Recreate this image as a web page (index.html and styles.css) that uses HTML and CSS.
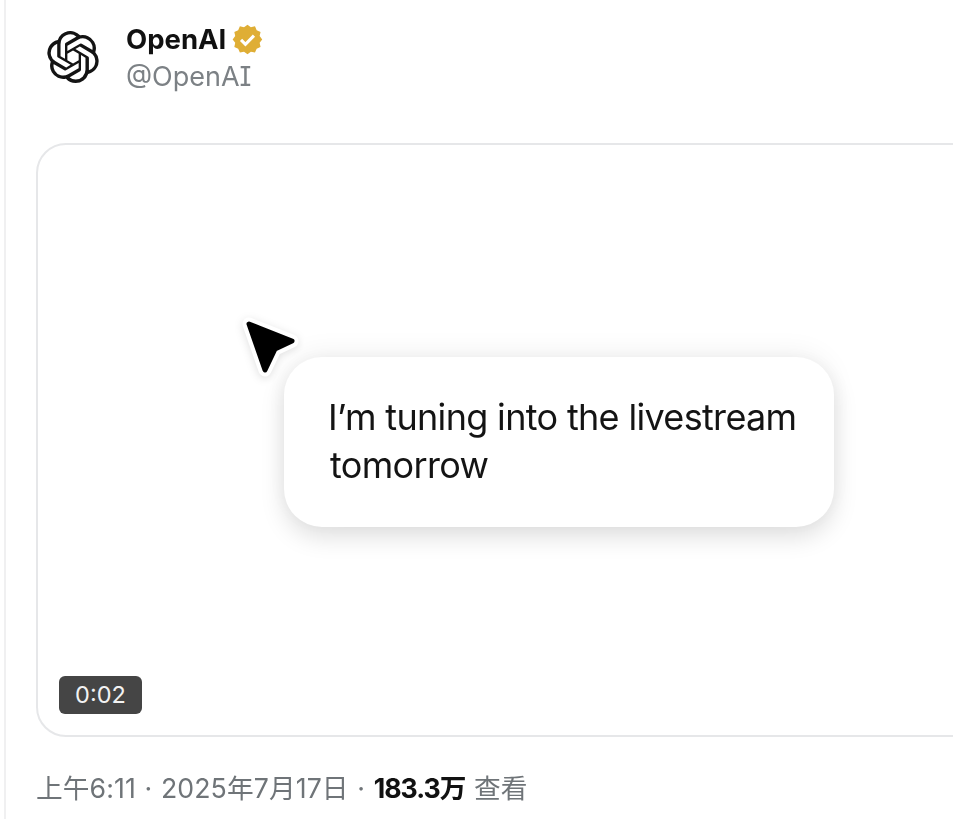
FILE: index.html
```html
<!DOCTYPE html>
<html lang="zh">
<head>
<meta charset="utf-8">
<title>OpenAI</title>
<link rel="stylesheet" href="styles.css">
</head>
<body>
<main class="post">
  <header class="author">
    <svg class="logo" viewBox="0 0 24 24" aria-hidden="true"><path d="M22.2819 9.8211a5.9847 5.9847 0 0 0-.5157-4.9108 6.0462 6.0462 0 0 0-6.5098-2.9A6.0651 6.0651 0 0 0 4.9807 4.1818a5.9847 5.9847 0 0 0-3.9977 2.9 6.0462 6.0462 0 0 0 .7427 7.0966 5.98 5.98 0 0 0 .511 4.9107 6.051 6.051 0 0 0 6.5146 2.9001A5.9847 5.9847 0 0 0 13.2599 24a6.0557 6.0557 0 0 0 5.7718-4.2058 5.9894 5.9894 0 0 0 3.9977-2.9001 6.0557 6.0557 0 0 0-.7475-7.0729zm-9.022 12.6081a4.4755 4.4755 0 0 1-2.8764-1.0408l.1419-.0804 4.7783-2.7582a.7948.7948 0 0 0 .3927-.6813v-6.7369l2.02 1.1686a.071.071 0 0 1 .038.052v5.5826a4.504 4.504 0 0 1-4.4945 4.4944zm-9.6607-4.1254a4.4708 4.4708 0 0 1-.5346-3.0137l.142.0852 4.783 2.7582a.7712.7712 0 0 0 .7806 0l5.8428-3.3685v2.3324a.0804.0804 0 0 1-.0332.0615L9.74 19.9502a4.4992 4.4992 0 0 1-6.1408-1.6464zM2.3408 7.8956a4.485 4.485 0 0 1 2.3655-1.9728V11.6a.7664.7664 0 0 0 .3879.6765l5.8144 3.3543-2.0201 1.1685a.0757.0757 0 0 1-.071 0l-4.8303-2.7865A4.504 4.504 0 0 1 2.3408 7.872zm16.5963 3.8558L13.1038 8.364 15.1192 7.2a.0757.0757 0 0 1 .071 0l4.8303 2.7913a4.4944 4.4944 0 0 1-.6765 8.1042v-5.6772a.79.79 0 0 0-.407-.667zm2.0107-3.0231l-.142-.0852-4.7735-2.7818a.7759.7759 0 0 0-.7854 0L9.409 9.2297V6.8974a.0662.0662 0 0 1 .0284-.0615l4.8303-2.7866a4.4992 4.4992 0 0 1 6.6802 4.66zM8.3065 12.863l-2.02-1.1638a.0804.0804 0 0 1-.038-.0567V6.0742a4.4992 4.4992 0 0 1 7.3757-3.4537l-.142.0805L8.704 5.459a.7948.7948 0 0 0-.3927.6813zm1.0976-2.3654l2.602-1.4998 2.6069 1.4998v2.9994l-2.5974 1.4997-2.6067-1.4997Z"/></svg>
    <div class="names">
      <div class="name-row">
        <span class="name">OpenAI</span>
        <svg class="badge" viewBox="0 0 24 24" aria-hidden="true"><path class="badge-fill" d="M12 0.5l2.6 2 3.2-.7 1.3 3 3 1.3-.7 3.2 2 2.7-2 2.6.7 3.2-3 1.3-1.3 3-3.2-.7-2.6 2-2.7-2-3.2.7-1.3-3-3-1.3.7-3.2-2-2.6 2-2.7-.7-3.2 3-1.3 1.3-3 3.2.7z"/><path class="badge-check" d="M7 12.3l3.4 3.4L17 9"/></svg>
      </div>
      <div class="handle">@OpenAI</div>
    </div>
  </header>
  <section class="video">
    <div class="bubble">
      <svg class="cursor" viewBox="0 0 60 64" aria-hidden="true"><path class="cursor-halo" d="M9 9 L52 26 L35 34 L25 55 Z"/><path class="cursor-arrow" d="M9 9 L52 26 L35 34 L25 55 Z"/></svg>
      <p class="message">I’m tuning into the livestream<br><span class="second-line">tomorrow</span></p>
    </div>
    <span class="time">0:02</span>
  </section>
  <footer class="meta">上午6:11 · 2025年7月17日 · <b class="views">183.3万</b> 查看</footer>
</main>
</body>
</html>
```

FILE: styles.css
```css
html, body {
  margin: 0;
  height: 100%;
  overflow: hidden;
  background: #fff;
}
body {
  font-family: "Inter", "Noto Sans CJK SC", sans-serif;
  color: #0f1419;
}
.post {
  box-sizing: border-box;
  height: 819px;
  margin-left: 4px;
  border-left: 2px solid #f0f0f1;
  padding-left: 30px;
  overflow: hidden;
  filter: blur(0.6px);
}
.author {
  display: flex;
  align-items: flex-start;
  gap: 27px;
  padding: 22px 0 0 11px;
  height: 143px;
  box-sizing: border-box;
}
.logo {
  width: 52px;
  height: 52px;
  margin-top: 9px;
  fill: #141414;
  flex: none;
}
.names {
  display: flex;
  flex-direction: column;
}
.name-row {
  display: flex;
  align-items: center;
  gap: 6px;
  height: 34px;
}
.name {
  font-size: 27.5px;
  font-weight: 700;
  color: #111;
}
.badge {
  width: 31px;
  height: 31px;
}
.badge-fill {
  fill: #dfae35;
}
.badge-check {
  fill: none;
  stroke: #fff;
  stroke-width: 2.4;
}
.handle {
  margin-top: 3px;
  font-size: 27px;
  line-height: 36px;
  color: #7c8185;
  font-feature-settings: "cv08" 1;
}
.video {
  position: relative;
  box-sizing: border-box;
  width: 1046px;
  height: 594px;
  padding-top: 4px;
  border: 2px solid #e6e7e9;
  border-radius: 30px;
  display: flex;
  align-items: center;
  justify-content: center;
}
.bubble {
  position: relative;
  box-sizing: border-box;
  width: 550px;
  height: 170px;
  padding: 36px 36px 0 44px;
  background: #fff;
  border-radius: 38px;
  box-shadow: 0 10px 24px rgba(0, 0, 0, 0.13), 0 -6px 26px rgba(0, 0, 0, 0.05);
}
.message {
  margin: 0;
  font-size: 36px;
  line-height: 48px;
  letter-spacing: -0.67px;
  color: #141414;
  white-space: nowrap;
}
.second-line {
  margin-left: 2px;
}
.cursor {
  position: absolute;
  left: -44px;
  top: -42px;
  width: 60px;
  height: 64px;
  filter: drop-shadow(0 2px 4px rgba(0, 0, 0, 0.12));
}
.cursor-halo {
  fill: #fff;
  stroke: #fff;
  stroke-width: 13;
  stroke-linejoin: round;
}
.cursor-arrow {
  fill: #000;
  stroke: #000;
  stroke-width: 5;
  stroke-linejoin: round;
}
.time {
  position: absolute;
  left: 21px;
  bottom: 21px;
  width: 83px;
  height: 38px;
  line-height: 38px;
  text-align: center;
  font-size: 23.5px;
  color: #f2f2f2;
  background: #454545;
  border-radius: 6px;
}
.meta {
  margin-top: 33px;
  font-size: 26.7px;
  line-height: 36px;
  letter-spacing: 0.1px;
  word-spacing: 1px;
  color: #6f7478;
  white-space: nowrap;
}
.views {
  color: #111;
  font-weight: 700;
  letter-spacing: -1px;
}
```
